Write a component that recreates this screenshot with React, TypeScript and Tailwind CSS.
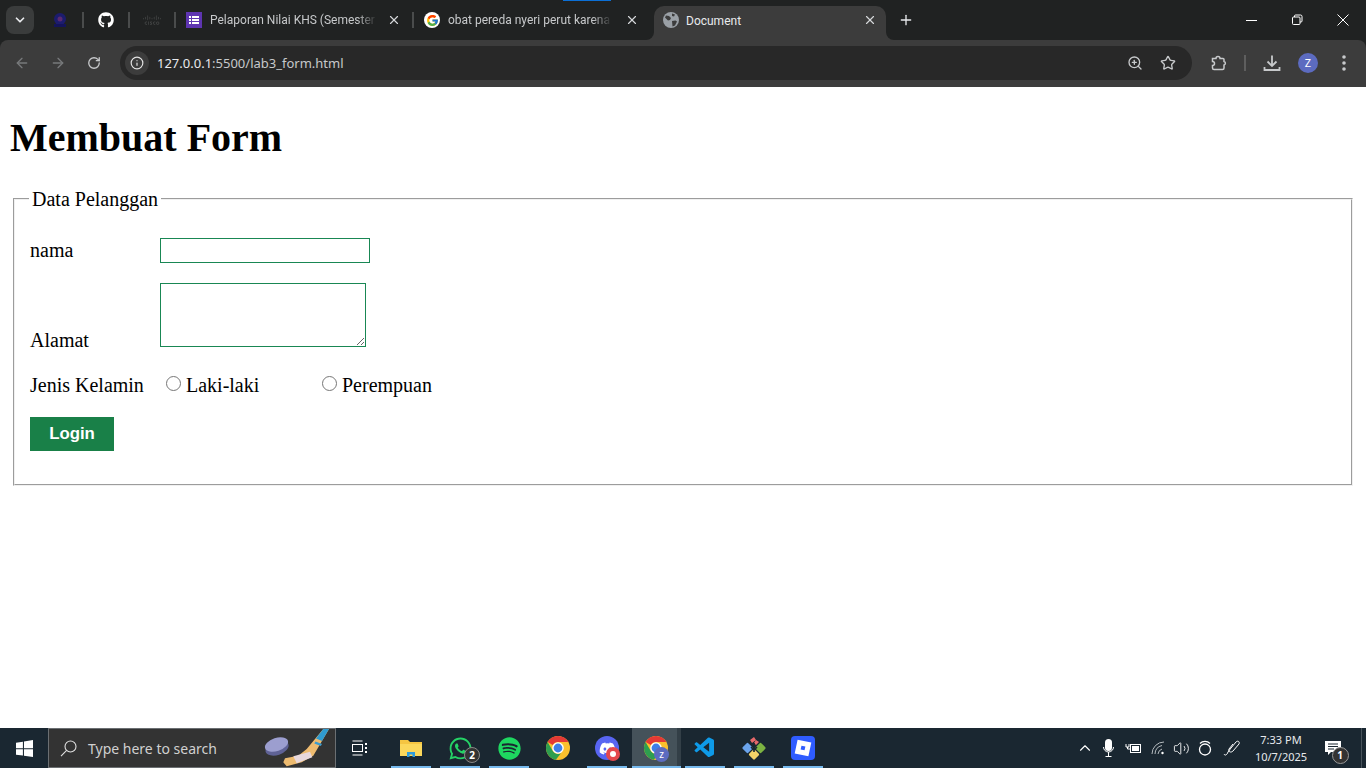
import {
  ArrowLeft,
  ArrowRight,
  ChevronDown,
  ChevronUp,
  Info,
  Plus,
  RotateCw,
  Star,
  Volume2,
  X,
  ZoomIn,
} from "lucide-react";
import { FaDiscord, FaGithub, FaSpotify, FaWhatsapp } from "react-icons/fa";
import { FcGoogle } from "react-icons/fc";
import { SiCisco } from "react-icons/si";
import { VscVscode } from "react-icons/vsc";
import type { ReactNode } from "react";

const uiFont = "font-['Noto_Sans','Open_Sans',sans-serif]";
const tabFont = "font-['Roboto','Noto_Sans',sans-serif]";

function ChromeLogo({ size = 24 }: { size?: number }) {
  return (
    <svg width={size} height={size} viewBox="0 0 24 24">
      <circle cx="12" cy="12" r="12" fill="#fbc02d" />
      <path d="M12 0a12 12 0 0 1 10.4 6H12a6 6 0 0 0-5.2 3L1.6 6A12 12 0 0 1 12 0z" fill="#e53935" />
      <path d="M1.6 6l5.2 9a6 6 0 0 0 8.2 2.2L9.8 23.8A12 12 0 0 1 1.6 6z" fill="#2e9e4f" />
      <circle cx="12" cy="12" r="5.8" fill="#fff" />
      <circle cx="12" cy="12" r="4.4" fill="#3f7fe8" />
    </svg>
  );
}

function Separator() {
  return <div className="h-[16px] w-[2px] shrink-0 bg-[#4a4c4c]" />;
}

function ActiveTab() {
  return (
    <div className="relative flex h-[34px] w-[232px] shrink-0 items-center self-end rounded-t-[10px] bg-[#3c3c3c] px-[9px] pb-[6px]">
      <svg width="16" height="16" viewBox="0 0 16 16" className="shrink-0">
        <circle cx="8" cy="8" r="8" fill="#9aa0a6" />
        <path d="M3 3.5l3 .5 2 2-1 2-2 .5-3-3zM9 9l3.5-.5 1.5 1-2 4-2.5 1zM9 1.5l3 1-1 2-2-.5z" fill="#3c3c3c" />
      </svg>
      <span className="ml-[7px] pt-[2px] text-[12px] text-[#e8eaed]">Document</span>
      <X size={14} strokeWidth={2} className="ml-auto text-[#d5d7da]" />
      <div className="absolute -left-[8px] bottom-0 h-[8px] w-[8px] bg-[#3c3c3c]">
        <div className="h-full w-full rounded-br-[8px] bg-[#202222]" />
      </div>
      <div className="absolute -right-[8px] bottom-0 h-[8px] w-[8px] bg-[#3c3c3c]">
        <div className="h-full w-full rounded-bl-[8px] bg-[#202222]" />
      </div>
    </div>
  );
}

function TabStrip() {
  return (
    <div className={`relative flex h-[40px] items-center bg-[#202222] text-[#c7c9cb] ${tabFont}`}>
      <div className="absolute left-[563px] top-0 h-px w-[48px] bg-[#0b6fd6]" />
      <div className="ml-[6px] flex h-[28px] w-[28px] shrink-0 items-center justify-center rounded-[8px] bg-[#3a3c3c]">
        <ChevronDown size={14} strokeWidth={3} className="text-[#e8eaed]" />
      </div>

      <div className="flex w-[48px] shrink-0 justify-center pl-[4px]">
        <svg width="14" height="16" viewBox="0 0 14 16">
          <circle cx="7" cy="7" r="6" fill="#1c1c6e" />
          <circle cx="7" cy="7" r="2.5" fill="#5a2a70" />
          <rect x="1" y="12" width="12" height="3" fill="#14145a" />
        </svg>
      </div>
      <Separator />
      <div className="flex w-[44px] shrink-0 justify-center">
        <FaGithub size={16} className="text-white" />
      </div>
      <Separator />
      <div className="flex w-[44px] shrink-0 justify-center">
        <SiCisco size={18} className="text-[#434545]" />
      </div>
      <Separator />

      <div className="flex w-[236px] shrink-0 items-center pl-[10px]">
        <svg width="16" height="16" viewBox="0 0 16 16" className="shrink-0">
          <rect width="16" height="16" fill="#5e35b1" />
          <path d="M3 4h2v2H3zM6 4h7v2H6zM3 7h2v2H3zM6 7h7v2H6zM3 10h2v2H3zM6 10h7v2H6z" fill="white" />
        </svg>
        <span className="ml-[8px] w-[167px] overflow-hidden whitespace-nowrap text-[12px] [mask-image:linear-gradient(to_right,black_88%,transparent)]">
          Pelaporan Nilai KHS (Semester
        </span>
        <X size={14} strokeWidth={2} className="ml-[10px] shrink-0 text-[#d5d7da]" />
      </div>
      <Separator />

      <div className="flex w-[240px] shrink-0 items-center pl-[10px]">
        <div className="flex h-[16px] w-[16px] shrink-0 items-center justify-center rounded-full bg-white">
          <FcGoogle size={13} />
        </div>
        <span className="ml-[8px] w-[164px] overflow-hidden whitespace-nowrap text-[12px] [mask-image:linear-gradient(to_right,black_88%,transparent)]">
          obat pereda nyeri perut karena
        </span>
        <X size={14} strokeWidth={2} className="ml-[13px] shrink-0 text-[#d5d7da]" />
      </div>

      <ActiveTab />

      <Plus size={16} strokeWidth={2} className="ml-[12px] shrink-0 text-[#e8eaed]" />

      <div className="ml-auto flex h-full shrink-0 items-center text-white">
        <div className="flex w-[46px] justify-center">
          <svg width="11" height="11" viewBox="0 0 11 11" stroke="currentColor">
            <path d="M0 5.5h11" />
          </svg>
        </div>
        <div className="flex w-[46px] justify-center">
          <svg width="12" height="12" viewBox="0 0 12 12" fill="none" stroke="currentColor">
            <rect x="1.5" y="3" width="7.5" height="7.5" rx="1" />
            <path d="M3.5 3V2a1 1 0 0 1 1-1h5a1.5 1.5 0 0 1 1.5 1.5V7a1 1 0 0 1-1 1H9" />
          </svg>
        </div>
        <div className="flex w-[46px] justify-center">
          <svg width="12" height="12" viewBox="0 0 12 12" stroke="currentColor">
            <path d="M.5.5l11 11M11.5.5l-11 11" />
          </svg>
        </div>
      </div>
    </div>
  );
}

function Toolbar() {
  return (
    <div className="bg-[#202222]">
      <div className="flex h-[47px] items-center rounded-t-[8px] bg-[#3c3c3c] pb-px">
        <div className="flex w-[120px] shrink-0 items-center pl-[14px]">
          <ArrowLeft size={16} className="text-[#77797b]" />
          <ArrowRight size={16} className="ml-[20px] text-[#77797b]" />
          <RotateCw size={14} strokeWidth={2.25} className="ml-[21px] text-[#c7c9cb]" />
        </div>
        <div className="flex h-[34px] w-[1072px] shrink-0 items-center rounded-full bg-[#282828] pl-[5px] pr-[16px]">
          <div className="flex h-[24px] w-[24px] items-center justify-center rounded-full bg-[#3c3c3c]">
            <Info size={14} className="text-[#e3e3e3]" />
          </div>
          <span className="ml-[8px] pt-px text-[13px] text-[#c7c9cb]">
            <span className="text-[#e8eaed]">127.0.0.1</span>:5500/lab3_form.html
          </span>
          <ZoomIn size={16} className="ml-auto text-[#c7c9cb]" />
          <Star size={16} strokeWidth={2} className="ml-[17px] text-[#c7c9cb]" />
        </div>
        <svg width="16" height="16" viewBox="0 0 16 16" fill="none" stroke="#c7c9cb" strokeWidth="1.5" className="ml-[19px]">
          <path d="M1.5 3.5H5a2 2 0 0 1 4 0h3a1 1 0 0 1 1 1v2a1.8 1.8 0 0 1 0 3.5V13a1.5 1.5 0 0 1-1.5 1.5H3A1.5 1.5 0 0 1 1.5 13v-2.5a2 2 0 0 0 0-4z" />
        </svg>
        <div className="ml-[17px] h-[16px] w-[2px] bg-[#5e5e5e]" />
        <svg width="18" height="18" viewBox="0 0 18 18" fill="none" stroke="#c7c9cb" strokeWidth="1.8" className="ml-[17px]">
          <path d="M9 1.5v10M4.5 7.5L9 12l4.5-4.5M1.5 13v3h15v-3" />
        </svg>
        <div className="ml-[17px] flex h-[20px] w-[20px] items-center justify-center rounded-full bg-[#5c6bc0] text-[11px] text-white">
          Z
        </div>
        <svg width="4" height="16" viewBox="0 0 4 16" fill="#c7c9cb" className="ml-[24px]">
          <circle cx="2" cy="2" r="1.8" />
          <circle cx="2" cy="8" r="1.8" />
          <circle cx="2" cy="14" r="1.8" />
        </svg>
      </div>
    </div>
  );
}

function Page() {
  return (
    <main className="h-[641px] bg-white font-['Liberation_Serif',serif] text-[20px] leading-[23px] text-black">
      <h1 className="pl-[10px] pt-[28px] text-[40px] font-bold leading-[46px]">Membuat Form</h1>
      <fieldset className="mx-[13px] mt-[26px] h-[299px] border-2 border-[#f0f0f0] px-[15px] pt-[27px] [border-style:groove]">
        <legend className="-ml-px px-[3px] pt-px">Data Pelanggan</legend>
        <div className="flex items-center">
          <label className="w-[130px] shrink-0">nama</label>
          <input type="text" className="h-[25px] w-[210px] border border-[#198754] bg-white outline-none" />
        </div>
        <div className="mt-[20px] flex items-end">
          <label className="-mb-[5px] w-[130px] shrink-0">Alamat</label>
          <textarea className="h-[64px] w-[206px] border border-[#198754] bg-white outline-none" />
        </div>
        <div className="mt-[27px] flex items-center">
          <label className="w-[130px] shrink-0">Jenis Kelamin</label>
          <input type="radio" name="jk" className="mb-[4px] ml-[6px] h-[15px] w-[15px]" />
          <span className="ml-[5px] w-[136px]">Laki-laki</span>
          <input type="radio" name="jk" className="mb-[4px] h-[15px] w-[15px]" />
          <span className="ml-[5px]">Perempuan</span>
        </div>
        <button className="mt-[20px] block h-[34px] w-[84px] bg-[#198048] pb-[2px] font-['Liberation_Sans',sans-serif] text-[16.8px] font-bold text-white">
          Login
        </button>
      </fieldset>
    </main>
  );
}

function PuckAndStick() {
  return (
    <svg width="75" height="38" viewBox="0 0 75 38" className="shrink-0">
      <path d="M63.3 0H69L53.3 26.7l-11.6 6.6-15 4-3.4-4 1.7-4 13.3-2.6L46.7 20z" fill="#eebb70" />
      <path d="M63.3 0H69l-7 12-6-2.5z" fill="#2f9bd0" />
      <path d="M55.5 12.5l6.5 2.5-1.2 2-6.5-2.5z" fill="#3a9bd0" />
      <path d="M33.3 27.3L50 22.7l2.3 5.6-15.6 6z" fill="#e8d8dc" />
      <ellipse cx="17" cy="19" rx="12" ry="7" transform="rotate(-18 17 19)" fill="#5f6296" />
      <ellipse cx="16.5" cy="15.5" rx="12" ry="6.5" transform="rotate(-18 16.5 15.5)" fill="#9c9ecf" />
    </svg>
  );
}

function TaskIcon({ active, open, children }: { active?: boolean; open?: boolean; children: ReactNode }) {
  return (
    <div className={`relative flex h-[40px] w-[49px] shrink-0 items-center justify-center ${active ? "bg-[#45525a]" : ""}`}>
      {children}
      {active && <div className="absolute right-0 top-0 h-full w-[4px] bg-[#333f47]" />}
      {open && <div className="absolute bottom-0 left-[4.5px] h-[2px] w-[40px] bg-[#76b9ed]" />}
      {active && <div className="absolute bottom-0 left-0 h-[2px] w-full bg-[#76b9ed]" />}
    </div>
  );
}

function Badge({ className, children }: { className: string; children: ReactNode }) {
  return (
    <div className={`absolute flex items-center justify-center rounded-full text-[10px] font-bold text-white ${className}`}>
      {children}
    </div>
  );
}

function TrayCell({ width, children }: { width: string; children: ReactNode }) {
  return <div className={`relative flex h-full shrink-0 items-center justify-center ${width}`}>{children}</div>;
}

function Taskbar() {
  return (
    <footer className={`flex h-[40px] items-center bg-[#1a2731] text-white ${uiFont}`}>
      <div className="flex w-[48px] shrink-0 justify-center">
        <svg width="17" height="17" viewBox="0 0 16 16" fill="white">
          <path d="M0 2.5l6.5-.9v6.1H0zM7.5 1.4L16 0v7.7H7.5zM0 8.7h6.5v6L0 13.8zM7.5 8.7H16V16l-8.5-1.2z" />
        </svg>
      </div>
      <div className="flex h-[40px] w-[288px] shrink-0 items-center border border-[#6b6f72] bg-[#333] pl-[11px] text-[#d0d0d0]">
        <svg width="17" height="17" viewBox="0 0 17 17" fill="none" stroke="#e0e0e0" strokeWidth="1.1" className="shrink-0">
          <circle cx="10.5" cy="6.5" r="5.5" />
          <path d="M6.6 10.4L1 16.2" />
        </svg>
        <span className="ml-[11px] w-[172px] shrink-0 text-[14px]">Type here to search</span>
        <PuckAndStick />
      </div>
      <div className="flex w-[48px] shrink-0 justify-center">
        <svg width="16" height="16" viewBox="0 0 16 16" fill="none" stroke="white">
          <path d="M.5 1h10M.5 15h10" />
          <rect x=".5" y="4.5" width="10" height="7" />
          <path d="M14 3v2M14 7v2M14 11v2" strokeWidth="2" />
        </svg>
      </div>
      <div className="ml-[2.5px] flex">
        <TaskIcon open>
          <svg width="22" height="20" viewBox="0 0 22 20">
            <path d="M0 2h8l2 2h12v14H0z" fill="#f5c542" />
            <rect x="0" y="6" width="22" height="12" fill="#fbd75b" />
            <path d="M7 14h8v5h-2.5v-2.5h-3V19H7z" fill="#2d9bdc" />
          </svg>
        </TaskIcon>
        <TaskIcon open>
          <FaWhatsapp size={25} className="text-[#25d366]" />
          <Badge className="bottom-[5px] right-[4.5px] h-[16px] w-[16px] border border-[#888] bg-[#333]">2</Badge>
        </TaskIcon>
        <TaskIcon open>
          <FaSpotify size={23} className="text-[#1ed760]" />
        </TaskIcon>
        <TaskIcon>
          <ChromeLogo />
        </TaskIcon>
        <TaskIcon open>
          <div className="flex h-[24px] w-[24px] items-center justify-center rounded-full bg-[#5865f2]">
            <FaDiscord size={17} />
          </div>
          <Badge className="bottom-[7px] right-[11.5px] h-[14px] w-[14px] bg-[#e5484d]">
            <div className="h-[6px] w-[6px] rounded-full bg-white" />
          </Badge>
        </TaskIcon>
        <TaskIcon active>
          <ChromeLogo />
          <Badge className="bottom-[6.5px] right-[11.5px] h-[15px] w-[15px] bg-[#5c6bc0] font-normal">z</Badge>
        </TaskIcon>
        <TaskIcon open>
          <VscVscode size={24} className="text-[#0e9ae8]" />
        </TaskIcon>
        <TaskIcon open>
          <svg width="24" height="24" viewBox="0 0 24 24">
            <rect x="1.5" y="8" width="8" height="8" rx="1.5" transform="rotate(45 5.5 12)" fill="#6ba4ec" />
            <rect x="14.5" y="8" width="8" height="8" rx="1.5" transform="rotate(45 18.5 12)" fill="#7cb342" />
            <rect x="8" y="14.5" width="8" height="8" rx="1.5" transform="rotate(45 12 18.5)" fill="#f2d268" />
            <path d="M8 4l4-3 2 3-4 3zM14 4l3 2-3 3-2-2z" fill="#e8696b" />
            <path d="M12 7v9M9 11l3 3 3-3" stroke="#1a2731" strokeWidth="1.6" fill="none" />
          </svg>
        </TaskIcon>
        <TaskIcon open>
          <div className="flex h-[24px] w-[24px] items-center justify-center rounded-[4px] bg-[#2f5cff]">
            <div className="flex h-[14px] w-[14px] rotate-12 items-center justify-center bg-white">
              <div className="h-[4px] w-[4px] bg-[#2f5cff]" />
            </div>
          </div>
        </TaskIcon>
      </div>
      <div className="ml-auto flex h-full items-center">
        <TrayCell width="w-[24px]">
          <ChevronUp size={18} strokeWidth={1.5} />
        </TrayCell>
        <TrayCell width="w-[22px]">
          <svg width="11" height="18" viewBox="0 0 11 18" fill="white">
            <rect x="2" y="0" width="7" height="12" rx="3.5" />
            <path d="M.5 8a5 5 0 0 0 10 0M5.5 13v4M2.5 17.5h6" fill="none" stroke="white" />
          </svg>
        </TrayCell>
        <TrayCell width="w-[28px]">
          <svg width="16" height="11" viewBox="0 0 16 11" fill="none" stroke="white">
            <path d="M1 1v3h3V1M2.5 4v2H5" />
            <rect x="5.5" y="1.5" width="10" height="8" />
            <rect x="7" y="3" width="7" height="5" fill="white" stroke="none" />
          </svg>
        </TrayCell>
        <TrayCell width="w-[22px]">
          <svg width="14" height="14" viewBox="0 0 14 14" fill="none" stroke="#b5bbbf">
            <path d="M1 13A12 12 0 0 1 13 1M4 13a9 9 0 0 1 7-8.5M7 13a6 6 0 0 1 4-5" />
            <circle cx="11.5" cy="12" r="1.2" fill="white" stroke="none" />
          </svg>
        </TrayCell>
        <TrayCell width="w-[24px]">
          <Volume2 size={17} strokeWidth={1.25} />
        </TrayCell>
        <TrayCell width="w-[24px]">
          <svg width="14" height="16" viewBox="0 0 14 16" fill="none" stroke="white" strokeWidth="1.3">
            <circle cx="7" cy="9.5" r="5.5" />
            <path d="M2 3.5a7 7 0 0 1 10 0" />
          </svg>
        </TrayCell>
        <TrayCell width="w-[30px]">
          <svg width="18" height="18" viewBox="0 0 18 18" fill="none" stroke="white">
            <path d="M1 15c1 2 3 1 4-2l3-4 5-6c2-2 4 0 3 2l-6 7c-2 2-5 1-4-2l4-5" />
          </svg>
        </TrayCell>
        <div className="flex w-[68px] shrink-0 flex-col items-center text-[11px] leading-[17px] text-[#e8eaed]">
          <span>7:33 PM</span>
          <span>10/7/2025</span>
        </div>
        <TrayCell width="w-[36px]">
          <svg width="16" height="15" viewBox="0 0 16 15" fill="white">
            <path d="M0 0h16v11H6l-3 3v-3H0z" />
            <path d="M3 3h10M3 5.5h10M3 8h6" stroke="#1a2731" />
          </svg>
          <Badge className="bottom-[4px] right-[2.5px] h-[17px] w-[17px] border border-[#999] bg-[#333]">1</Badge>
        </TrayCell>
        <div className="ml-[10px] h-full w-px bg-[#48535b]" />
        <div className="w-[4px]" />
      </div>
    </footer>
  );
}

export default function App() {
  return (
    <div className={`h-[768px] w-[1366px] overflow-hidden ${uiFont}`}>
      <TabStrip />
      <Toolbar />
      <Page />
      <Taskbar />
    </div>
  );
}
